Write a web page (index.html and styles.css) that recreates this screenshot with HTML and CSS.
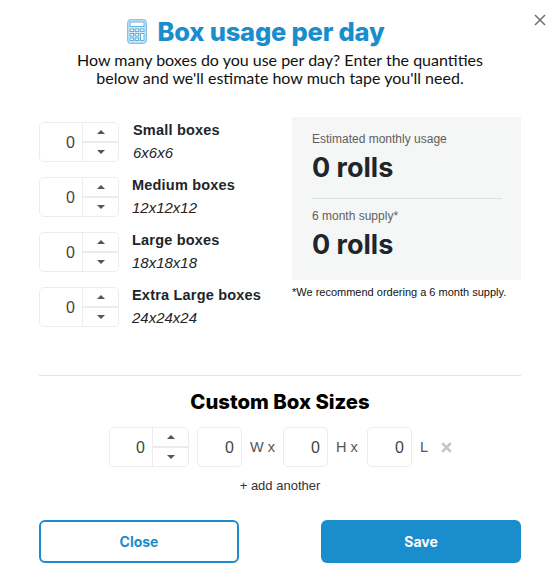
FILE: index.html
```html
<!DOCTYPE html>
<html lang="en">
<head>
    <meta charset="UTF-8">
    <meta name="viewport" content="width=device-width, initial-scale=1.0">
    <title>Box usage per day</title>
    <link rel="stylesheet" href="styles.css">
</head>
<body>
    <div class="modal">
        <button class="close-x" aria-label="Close">
            <svg width="12" height="12" viewBox="0 0 12 12"><path d="M1 1l10 10M11 1L1 11" stroke="#6f6f6f" stroke-width="1.5" fill="none"/></svg>
        </button>

        <h1 class="title">
            <svg class="calc" width="20" height="25" viewBox="0 0 20 25" fill="none" stroke="#5fb0e0" stroke-width="1">
                <rect x="0.75" y="0.75" width="18.5" height="23.5" rx="2.5" fill="#d5e9f6"/>
                <rect x="3" y="3" width="14" height="4.5" fill="#fff"/>
                <rect x="3" y="10" width="3.5" height="2.5" fill="#fff"/>
                <rect x="8.2" y="10" width="3.5" height="2.5" fill="#fff"/>
                <rect x="13.5" y="10" width="3.5" height="2.5" fill="#fff"/>
                <rect x="3" y="14.5" width="3.5" height="2.5" fill="#fff"/>
                <rect x="8.2" y="14.5" width="3.5" height="2.5" fill="#fff"/>
                <rect x="13.5" y="14.5" width="3.5" height="7" fill="#fff"/>
                <rect x="3" y="19" width="3.5" height="2.5" fill="#fff"/>
                <rect x="8.2" y="19" width="3.5" height="2.5" fill="#fff"/>
            </svg>
            Box usage per day
        </h1>
        <p class="intro">How many boxes do you use per day? Enter the quantities<br>below and we'll estimate how much tape you'll need.</p>

        <div class="columns">
            <div class="box-list">
                <div class="box-row">
                    <div class="stepper">
                        <input class="num" type="text" value="0">
                        <div class="arrows">
                            <button class="up"></button>
                            <button class="down"></button>
                        </div>
                    </div>
                    <div class="box-label small-shift">
                        <strong>Small boxes</strong>
                        <em>6x6x6</em>
                    </div>
                </div>
                <div class="box-row">
                    <div class="stepper">
                        <input class="num" type="text" value="0">
                        <div class="arrows">
                            <button class="up"></button>
                            <button class="down"></button>
                        </div>
                    </div>
                    <div class="box-label">
                        <strong>Medium boxes</strong>
                        <em>12x12x12</em>
                    </div>
                </div>
                <div class="box-row">
                    <div class="stepper">
                        <input class="num" type="text" value="0">
                        <div class="arrows">
                            <button class="up"></button>
                            <button class="down"></button>
                        </div>
                    </div>
                    <div class="box-label">
                        <strong>Large boxes</strong>
                        <em>18x18x18</em>
                    </div>
                </div>
                <div class="box-row">
                    <div class="stepper">
                        <input class="num" type="text" value="0">
                        <div class="arrows">
                            <button class="up"></button>
                            <button class="down"></button>
                        </div>
                    </div>
                    <div class="box-label">
                        <strong>Extra Large boxes</strong>
                        <em>24x24x24</em>
                    </div>
                </div>
            </div>

            <div class="summary">
                <div class="panel">
                    <div class="panel-label">Estimated monthly usage</div>
                    <div class="panel-value">0 rolls</div>
                    <hr class="panel-line">
                    <div class="panel-label">6 month supply*</div>
                    <div class="panel-value">0 rolls</div>
                </div>
                <p class="note">*We recommend ordering a 6 month supply.</p>
            </div>
        </div>

        <hr class="divider">

        <h2 class="custom-title">Custom Box Sizes</h2>
        <div class="custom-row">
            <div class="stepper">
                <input class="num" type="text" value="0">
                <div class="arrows">
                    <button class="up"></button>
                    <button class="down"></button>
                </div>
            </div>
            <input class="size first" type="text" value="0">
            <span class="unit">W x</span>
            <input class="size" type="text" value="0">
            <span class="unit">H x</span>
            <input class="size" type="text" value="0">
            <span class="unit">L</span>
            <svg class="remove" width="11" height="11" viewBox="0 0 11 11"><path d="M1.2 1.2l8.6 8.6M9.8 1.2l-8.6 8.6" stroke="#c4c4c4" stroke-width="2.6" fill="none"/></svg>
        </div>
        <a class="add-another" href="#">+ add another</a>

        <div class="actions">
            <button class="btn btn-close">Close</button>
            <button class="btn btn-save">Save</button>
        </div>
    </div>
</body>
</html>
```

FILE: styles.css
```css
* {
    box-sizing: border-box;
}
body {
    margin: 0;
    background-color: #fff;
    font-family: "Liberation Sans", Arial, sans-serif;
    color: #212529;
}
.modal {
    position: relative;
    width: 560px;
    height: 579px;
    padding: 15px 39px 0;
    overflow: hidden;
}
.close-x {
    position: absolute;
    top: 14px;
    right: 14px;
    padding: 0;
    border: none;
    background: none;
    line-height: 0;
}
.title {
    display: flex;
    align-items: center;
    justify-content: center;
    gap: 10px;
    margin: 0;
    height: 33px;
    padding-right: 48px;
    font-family: Inter, sans-serif;
    font-size: 25.5px;
    font-weight: 800;
    letter-spacing: -0.2px;
    color: #1a8dcc;
}
.intro {
    margin: 3px 0 0;
    font-family: Lato, sans-serif;
    font-size: 16px;
    line-height: 18px;
    text-align: center;
    color: #111;
}
.columns {
    display: flex;
    justify-content: space-between;
    margin-top: 30px;
    height: 258px;
}
.box-list {
    display: flex;
    flex-direction: column;
    gap: 15px;
    padding-top: 5px;
}
.box-row {
    display: flex;
    gap: 13px;
    height: 40px;
}
.stepper {
    display: flex;
    width: 80px;
    height: 40px;
    border: 1px solid #ececec;
    border-radius: 5px;
    overflow: hidden;
}
.num {
    width: 42px;
    border: none;
    padding: 2px 7px 0 0;
    font: 16px "Liberation Sans", Arial, sans-serif;
    color: #444;
    text-align: right;
}
.arrows {
    display: flex;
    flex-direction: column;
    flex: 1;
    border-left: 1px solid #ececec;
}
.arrows button {
    flex: 1;
    position: relative;
    padding: 0;
    border: none;
    background: #fff;
}
.arrows .up {
    border-bottom: 2px solid #ececec;
}
.arrows button::after {
    content: "";
    position: absolute;
    left: 50%;
    top: 50%;
    margin: -2px 0 0 -4px;
    border-left: 4px solid transparent;
    border-right: 4px solid transparent;
}
.arrows .up::after {
    border-bottom: 4px solid #555;
}
.arrows .down::after {
    border-top: 4px solid #555;
}
.box-label {
    display: flex;
    flex-direction: column;
    margin-top: -2px;
}
.small-shift {
    margin-left: 1px;
}
.box-label strong {
    font-size: 14.5px;
    line-height: 20px;
    letter-spacing: 0.2px;
}
.box-label em {
    margin-top: 3px;
    font-size: 15px;
    line-height: 20px;
}
.summary {
    width: 229px;
}
.panel {
    height: 163px;
    padding: 15px 19px 0 20px;
    background-color: #f5f6f6;
}
.panel-label {
    font-size: 12px;
    line-height: 14px;
    color: #5f5f5f;
}
.panel-value {
    margin-top: 5px;
    font-family: Inter, sans-serif;
    font-size: 27px;
    font-weight: 700;
    line-height: 34px;
    color: #212529;
}
.panel-line {
    margin: 13px 0 10px;
    border: none;
    border-top: 1px solid #dcdedf;
}
.note {
    margin: 6px 0 0;
    font-size: 11px;
    line-height: 13px;
    color: #111;
}
.divider {
    margin: 0;
    border: none;
    border-top: 1px solid #e2e2e2;
}
.custom-title {
    margin: 13px 0 0;
    font-family: Inter, sans-serif;
    font-size: 20.3px;
    font-weight: 800;
    line-height: 25px;
    text-align: center;
    color: #000;
}
.custom-row {
    display: flex;
    align-items: center;
    margin: 13px 0 0 70px;
    height: 40px;
}
.size {
    width: 45px;
    height: 40px;
    padding: 2px 7px 0 0;
    border: 1px solid #ececec;
    border-radius: 5px;
    font: 16px "Liberation Sans", Arial, sans-serif;
    color: #444;
    text-align: right;
}
.size.first {
    margin-left: 8px;
}
.unit {
    width: 41px;
    padding-left: 8px;
    font-size: 14.5px;
    color: #555;
}
.unit:nth-of-type(2) {
    width: 39px;
}
.unit:last-of-type {
    width: 29px;
}
.remove {
    display: block;
}
.add-another {
    display: block;
    margin-top: 11px;
    font-size: 13px;
    line-height: 16px;
    text-align: center;
    color: #333;
    text-decoration: none;
}
.actions {
    display: flex;
    justify-content: space-between;
    margin-top: 26px;
}
.btn {
    width: 200px;
    height: 43px;
    border-radius: 6px;
    font-family: Inter, sans-serif;
    font-size: 14px;
    font-weight: 700;
}
.btn-close {
    border: 2px solid #1a8dcc;
    background: #fff;
    color: #1a8dcc;
}
.btn-save {
    border: none;
    background: #1a8dcc;
    color: #fff;
}
```
